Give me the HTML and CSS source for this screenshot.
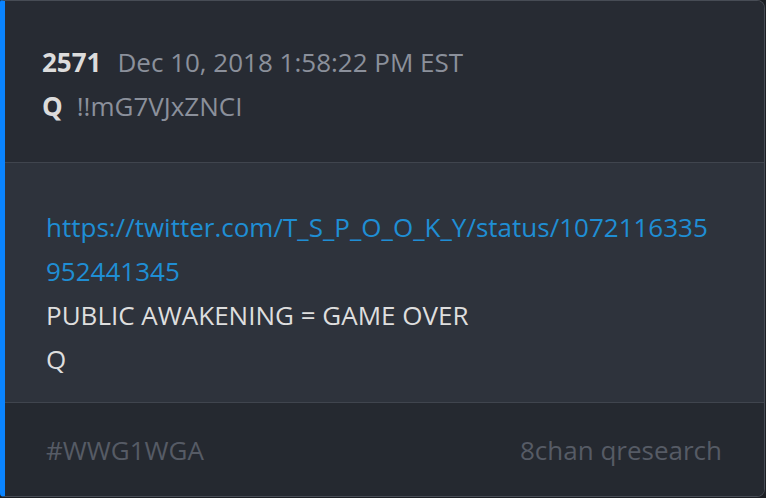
FILE: index.html
```html
<!DOCTYPE html>
<html>
<head>
<meta charset="utf-8">
<link rel="stylesheet" href="styles.css">
</head>
<body>
<div class="card">
  <div class="head">
    <div class="row"><span class="num">2571</span><span class="date">Dec 10, 2018 1:58:22 PM EST</span></div>
    <div class="row"><span class="num">Q</span><span class="trip">!!mG7VJxZNCI</span></div>
  </div>
  <div class="body">
    <a class="link" href="#">https://twitter.com/T_S_P_O_O_K_Y/status/1072116335952441345</a>
    <div class="line">PUBLIC AWAKENING = GAME OVER</div>
    <div class="line">Q</div>
  </div>
  <div class="foot">
    <span>#WWG1WGA</span>
    <span>8chan qresearch</span>
  </div>
</div>
</body>
</html>
```
FILE: styles.css
```css
html, body {
  margin: 0;
  padding: 0;
  background: #1c1f24;
}
body {
  width: 766px;
  height: 498px;
  font-family: "Open Sans", "DejaVu Sans", sans-serif;
  font-size: 26px;
}
.card {
  box-sizing: border-box;
  width: 765px;
  height: 497px;
  border: 1px solid #474c55;
  border-left: 5px solid #0a84ff;
  border-radius: 2px 8px 8px 4px;
  overflow: hidden;
  display: flex;
  flex-direction: column;
}
.head {
  background: #272b33;
  padding: 39px 20px 0 37px;
  height: 162px;
  box-sizing: border-box;
  border-bottom: 1px solid #40454e;
}
.row {
  line-height: 44px;
  display: flex;
}
.num {
  font-weight: 700;
  color: #dcdcdc;
}
.date {
  color: #8b909b;
  margin-left: 16px;
}
.trip {
  color: #8b909b;
  margin-left: 14px;
}
.body {
  background: #2e333c;
  height: 240px;
  box-sizing: border-box;
  padding: 42px 48px 0 41px;
  border-bottom: 1px solid #40454e;
  line-height: 44px;
}
.link {
  display: block;
  color: #1f8ed4;
  text-decoration: none;
  word-break: break-all;
}
.line {
  color: #dedede;
}
.foot {
  flex: 1;
  background: #252930;
  display: flex;
  justify-content: space-between;
  align-items: center;
  padding: 0 42px 0 41px;
  color: #565b65;
}
```
